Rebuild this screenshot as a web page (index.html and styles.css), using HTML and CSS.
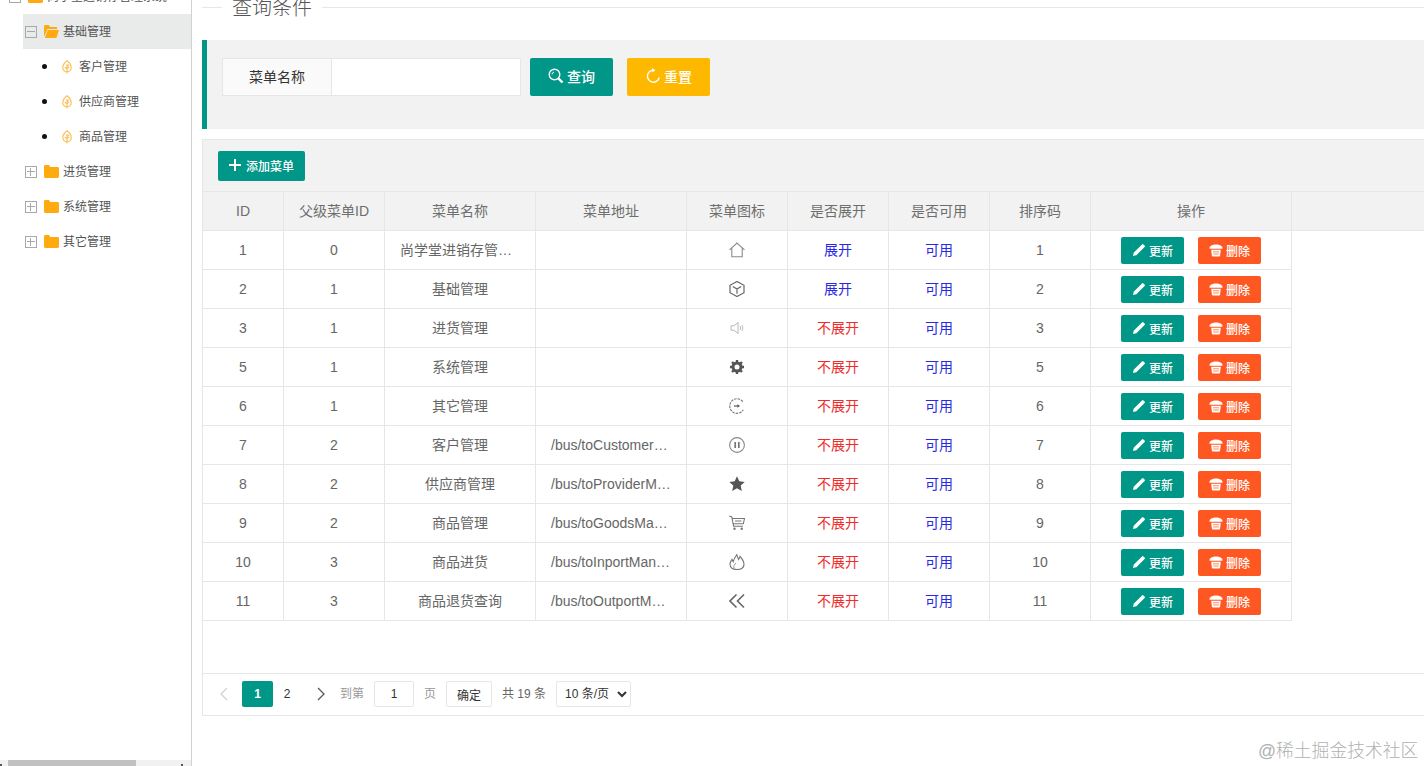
FILE: index.html
```html
<!DOCTYPE html>
<html lang="zh-CN">
<head>
<meta charset="utf-8">
<title>菜单管理</title>
<link rel="stylesheet" href="styles.css">
</head>
<body>
<svg class="defs" width="0" height="0" aria-hidden="true">
  <defs>
    <symbol id="folder" viewBox="0 0 15 13"><path d="M0 1.5C0 .7.6 0 1.4 0h3.5l1.500 2h7.200c.8 0 1.400.6 1.400 1.400v8.200c0 .8-.6 1.400-1.400 1.400H1.400C.6 13 0 12.400 0 11.600z" fill="#ffab0f"/></symbol>
    <symbol id="folder-open" viewBox="0 0 15 13"><path d="M0 1.500C0 .7.600 0 1.400 0h3.300l1.500 2h5.800c.7 0 1.300.6 1.300 1.300V4H3.500L.6 11 0 11z" fill="#ffab0f"/><path d="M3.900 5H15l-2.600 8H.8z" fill="#ffab0f"/></symbol>
    <symbol id="leaf" viewBox="0 0 10 14"><path d="M5 .8C7.500 2.800 9.200 5 9.200 7.500c0 2.600-1.900 4.300-4.200 4.300S.8 10.100.8 7.500C.8 5 2.500 2.800 5 .8zM5 4v9.500M5 6.500 7 5M5 9 2.800 7.300M5 8.500l2.300-1.500" fill="none" stroke="#fbc25e" stroke-width="1.200"/></symbol>
    <symbol id="pencil" viewBox="0 0 14 14"><path d="M1 13l.7-3.300L10 1.400a1 1 0 0 1 1.400 0l1.200 1.200a1 1 0 0 1 0 1.400L4.300 12.300z" fill="#fff"/></symbol>
    <symbol id="trash" viewBox="0 0 14 14"><path d="M.5 5c0-1.800 2.800-3.500 6.500-3.500S13.500 3.200 13.500 5v.8H.5z" fill="#fff"/><path d="M2.200 6.800h9.600l-.7 5.700c-.1.700-.6 1.100-1.300 1.100H4.200c-.7 0-1.200-.4-1.300-1.100z" fill="#fff"/><path d="M4 8.800h6M4.200 11h5.600" stroke="#ff8a5c"/></symbol>
  </defs>
</svg>
<div class="app">
  <aside class="sidebar">
    <div class="tree-scroll">
      <ul class="tree">
        <li class="node root"><span class="switch minus"></span><svg class="folder"><use href="#folder"/></svg><span>尚学堂进销存管理系统</span></li>
        <li class="node active"><span class="switch minus"></span><svg class="folder"><use href="#folder-open"/></svg><span>基础管理</span></li>
        <li class="node leaf"><span class="dot"></span><svg class="leaf-icon"><use href="#leaf"/></svg><span>客户管理</span></li>
        <li class="node leaf"><span class="dot"></span><svg class="leaf-icon"><use href="#leaf"/></svg><span>供应商管理</span></li>
        <li class="node leaf"><span class="dot"></span><svg class="leaf-icon"><use href="#leaf"/></svg><span>商品管理</span></li>
        <li class="node"><span class="switch plus"></span><svg class="folder"><use href="#folder"/></svg><span>进货管理</span></li>
        <li class="node"><span class="switch plus"></span><svg class="folder"><use href="#folder"/></svg><span>系统管理</span></li>
        <li class="node"><span class="switch plus"></span><svg class="folder"><use href="#folder"/></svg><span>其它管理</span></li>
      </ul>
    </div>
    <div class="hscroll"><span class="hscroll-thumb"></span></div>
  </aside>
  <main class="main">
    <div class="content">
      <div class="legend"><span class="legend-line short"></span><span class="legend-text">查询条件</span><span class="legend-line"></span></div>
      <form class="search">
        <label class="search-label">菜单名称</label>
        <input class="search-input" type="text">
        <button class="btn btn-query" type="button">
          <svg class="ico-16" viewBox="0 0 16 16"><circle cx="6.500" cy="6.500" r="5.300" fill="none" stroke="#fff" stroke-width="1.400"/><path d="M4 6.500a2.700 2.700 0 0 1 2-2.500" fill="none" stroke="#fff"/><path d="M10.500 10.500l4 4" stroke="#fff" stroke-width="2.400"/></svg>查询</button>
        <button class="btn btn-reset" type="button">
          <svg class="ico-16" viewBox="0 0 16 16"><path d="M8.500 2.200a6 6 0 1 0 5.800 7.300" fill="none" stroke="#fff" stroke-width="1.400"/><path d="M7 0l3.400 2.200L7.200 4.600z" fill="#fff"/></svg>重置</button>
      </form>
      <section class="box">
        <div class="toolbar">
          <button class="btn-add" type="button"><svg class="ico-12" viewBox="0 0 12 12"><path d="M6 0v12M0 6h12" stroke="#fff" stroke-width="2"/></svg>添加菜单</button>
        </div>
        <div class="thead-wrap">
          <table class="grid">
            <colgroup><col class="c-id"><col class="c-pid"><col class="c-w"><col class="c-w"><col class="c-n"><col class="c-n"><col class="c-n"><col class="c-n"><col class="c-op"></colgroup>
            <thead>
              <tr><th>ID</th><th>父级菜单ID</th><th>菜单名称</th><th>菜单地址</th><th>菜单图标</th><th>是否展开</th><th>是否可用</th><th>排序码</th><th>操作</th></tr>
            </thead>
          </table>
        </div>
        <div class="tbody-wrap">
          <table class="grid">
            <colgroup><col class="c-id"><col class="c-pid"><col class="c-w"><col class="c-w"><col class="c-n"><col class="c-n"><col class="c-n"><col class="c-n"><col class="c-op"></colgroup>
            <tbody>
              <tr><td>1</td><td>0</td><td><div class="cell">尚学堂进销存管理系统</div></td><td><div class="cell"></div></td>
                <td><svg class="row-ico" viewBox="0 0 16 16"><path d="M.5 7.800 8 1l7.500 6.800M2.800 5.800V14.800h10.400V5.800" fill="none" stroke="#8a8a8a" stroke-width="1.100"/></svg></td>
                <td class="blue">展开</td><td class="blue">可用</td><td>1</td><td><div class="ops"><button class="op op-edit" type="button"><svg class="ico-14"><use href="#pencil"/></svg>更新</button><button class="op op-del" type="button"><svg class="ico-14"><use href="#trash"/></svg>删除</button></div></td></tr>
              <tr><td>2</td><td>1</td><td><div class="cell">基础管理</div></td><td><div class="cell"></div></td>
                <td><svg class="row-ico" viewBox="0 0 16 16"><path d="M8 .5l7 3.800v7.400l-7 3.800-7-3.800V4.300zM3.800 5.500 8 8l4.200-2.500M8 8v4.800" fill="none" stroke="#666" stroke-width="1.200"/></svg></td>
                <td class="blue">展开</td><td class="blue">可用</td><td>2</td><td><div class="ops"><button class="op op-edit" type="button"><svg class="ico-14"><use href="#pencil"/></svg>更新</button><button class="op op-del" type="button"><svg class="ico-14"><use href="#trash"/></svg>删除</button></div></td></tr>
              <tr><td>3</td><td>1</td><td><div class="cell">进货管理</div></td><td><div class="cell"></div></td>
                <td><svg class="row-ico" viewBox="0 0 16 16"><path d="M2 5.800h3L9 2.500v11l-4-3.300H2zM11 6.200c.8 1 .8 2.600 0 3.600M12.800 5c1.300 1.800 1.300 4.200 0 6" fill="none" stroke="#b9b9b9"/></svg></td>
                <td class="red">不展开</td><td class="blue">可用</td><td>3</td><td><div class="ops"><button class="op op-edit" type="button"><svg class="ico-14"><use href="#pencil"/></svg>更新</button><button class="op op-del" type="button"><svg class="ico-14"><use href="#trash"/></svg>删除</button></div></td></tr>
              <tr><td>5</td><td>1</td><td><div class="cell">系统管理</div></td><td><div class="cell"></div></td>
                <td><svg class="row-ico" viewBox="0 0 16 16"><circle cx="8" cy="8" r="4" fill="none" stroke="#555" stroke-width="3"/><path d="M8 1v3M8 12v3M1 8h3M12 8h3M3 3l2.200 2.200M10.800 10.800 13 13M3 13l2.200-2.200M10.800 5.200 13 3" stroke="#555" stroke-width="2.400"/></svg></td>
                <td class="red">不展开</td><td class="blue">可用</td><td>5</td><td><div class="ops"><button class="op op-edit" type="button"><svg class="ico-14"><use href="#pencil"/></svg>更新</button><button class="op op-del" type="button"><svg class="ico-14"><use href="#trash"/></svg>删除</button></div></td></tr>
              <tr><td>6</td><td>1</td><td><div class="cell">其它管理</div></td><td><div class="cell"></div></td>
                <td><svg class="row-ico" viewBox="0 0 16 16"><path d="M13.800 3.600A7.300 7.300 0 1 0 14.300 11.800" fill="none" stroke="#777" stroke-width="1.100" stroke-dasharray="2.500 1"/><path d="M5 8h4" stroke="#555" stroke-width="1.200"/><path d="M8.500 6.200 11 8l-2.500 1.800z" fill="#555"/></svg></td>
                <td class="red">不展开</td><td class="blue">可用</td><td>6</td><td><div class="ops"><button class="op op-edit" type="button"><svg class="ico-14"><use href="#pencil"/></svg>更新</button><button class="op op-del" type="button"><svg class="ico-14"><use href="#trash"/></svg>删除</button></div></td></tr>
              <tr><td>7</td><td>2</td><td><div class="cell">客户管理</div></td><td><div class="cell left">/bus/toCustomerManager</div></td>
                <td><svg class="row-ico" viewBox="0 0 16 16"><circle cx="8" cy="8" r="7.400" fill="none" stroke="#888" stroke-width="1.100"/><path d="M6.200 5v6M9.800 5v6" stroke="#777" stroke-width="1.700"/></svg></td>
                <td class="red">不展开</td><td class="blue">可用</td><td>7</td><td><div class="ops"><button class="op op-edit" type="button"><svg class="ico-14"><use href="#pencil"/></svg>更新</button><button class="op op-del" type="button"><svg class="ico-14"><use href="#trash"/></svg>删除</button></div></td></tr>
              <tr><td>8</td><td>2</td><td><div class="cell">供应商管理</div></td><td><div class="cell left">/bus/toProviderManager</div></td>
                <td><svg class="row-ico" viewBox="0 0 16 16"><path d="M8 .3l2.300 5 5.400.6-4 3.700 1.100 5.400L8 12.300 3.200 15l1.100-5.400-4-3.700 5.400-.6z" fill="#555"/></svg></td>
                <td class="red">不展开</td><td class="blue">可用</td><td>8</td><td><div class="ops"><button class="op op-edit" type="button"><svg class="ico-14"><use href="#pencil"/></svg>更新</button><button class="op op-del" type="button"><svg class="ico-14"><use href="#trash"/></svg>删除</button></div></td></tr>
              <tr><td>9</td><td>2</td><td><div class="cell">商品管理</div></td><td><div class="cell left">/bus/toGoodsManager</div></td>
                <td><svg class="row-ico" viewBox="0 0 16 16"><path d="M.3 1l2.500.9 1.800 9.300h9.400M3.200 3.500H15.500l-1.200 5.200H4.200M6 6h6.500" fill="none" stroke="#777" stroke-width="1.100"/><circle cx="5.500" cy="13.800" r="1.200" fill="#777"/><circle cx="12.700" cy="13.800" r="1.200" fill="#777"/></svg></td>
                <td class="red">不展开</td><td class="blue">可用</td><td>9</td><td><div class="ops"><button class="op op-edit" type="button"><svg class="ico-14"><use href="#pencil"/></svg>更新</button><button class="op op-del" type="button"><svg class="ico-14"><use href="#trash"/></svg>删除</button></div></td></tr>
              <tr><td>10</td><td>3</td><td><div class="cell">商品进货</div></td><td><div class="cell left">/bus/toInportManager</div></td>
                <td><svg class="row-ico" viewBox="0 0 16 16"><path d="M8 15.500c-4 0-7-1.800-7-5.200 0-2.200 1-3.700 2-5l1.200 2.400C5 5 6.300 2.800 7.800.5c.3 2.200 1.300 3.500 1.800 5 .7-1 1.200-1.900 1.400-3 1.900 2 4 4.600 4 7.800 0 3.400-3 5.200-7 5.200z" fill="none" stroke="#777" stroke-width="1.100"/><path d="M5 14c-.6-2 .6-3.700 2-5" fill="none" stroke="#999"/></svg></td>
                <td class="red">不展开</td><td class="blue">可用</td><td>10</td><td><div class="ops"><button class="op op-edit" type="button"><svg class="ico-14"><use href="#pencil"/></svg>更新</button><button class="op op-del" type="button"><svg class="ico-14"><use href="#trash"/></svg>删除</button></div></td></tr>
              <tr><td>11</td><td>3</td><td><div class="cell">商品退货查询</div></td><td><div class="cell left">/bus/toOutportManager</div></td>
                <td><svg class="row-ico" viewBox="0 0 16 16"><path d="M7.500 1.500 1 8l6.500 6.500M15 1.500 8.500 8l6.500 6.500" fill="none" stroke="#666" stroke-width="1.600"/></svg></td>
                <td class="red">不展开</td><td class="blue">可用</td><td>11</td><td><div class="ops"><button class="op op-edit" type="button"><svg class="ico-14"><use href="#pencil"/></svg>更新</button><button class="op op-del" type="button"><svg class="ico-14"><use href="#trash"/></svg>删除</button></div></td></tr>
            </tbody>
          </table>
        </div>
        <div class="pager">
          <span class="pg-arrow prev"><svg width="9" height="14" viewBox="0 0 9 14"><path d="M8 1 2 7l6 6" fill="none" stroke="#d2d2d2" stroke-width="1.300"/></svg></span>
          <span class="pg-num current">1</span>
          <span class="pg-num">2</span>
          <span class="pg-arrow next"><svg width="9" height="14" viewBox="0 0 9 14"><path d="M1 1l6 6-6 6" fill="none" stroke="#555" stroke-width="1.300"/></svg></span>
          <span class="pg-text">到第</span>
          <input class="pg-input" type="text" value="1">
          <span class="pg-text pg-gap">页</span>
          <button class="pg-ok" type="button">确定</button>
          <span class="pg-total">共 19 条</span>
          <select class="pg-size"><option>10 条/页</option></select>
        </div>
      </section>
    </div>
  </main>
</div>
<div class="watermark">@稀土掘金技术社区</div>
</body>
</html>
```

FILE: styles.css
```css
* { box-sizing: border-box; }
html, body { margin: 0; height: 100%; overflow: hidden; background: #fff; }
body { font-family: "Liberation Sans", "Noto Sans CJK SC", sans-serif; font-size: 14px; line-height: 20px; color: #666; }
.defs { position: absolute; }
button, input, select { font-family: inherit; }

.app { display: flex; height: 766px; }

/* sidebar */
.sidebar { width: 192px; flex: none; display: flex; flex-direction: column; border-right: 1px solid #d2d2d2; }
.tree-scroll { flex: 1; overflow: hidden; }
.tree { list-style: none; margin: -21px 0 0; padding: 0; }
.node { height: 35px; display: flex; align-items: center; margin-left: 23px; padding-left: 2px; font-size: 12px; color: #555; }
.node.root { margin-left: 7px; }
.node.active { background: #e9eaea; }
.node.leaf { padding-left: 21px; color: #555; }
.switch { width: 12px; height: 12px; flex: none; border: 1px solid #a8a8a8; position: relative; }
.switch::before { content: ""; position: absolute; left: 1px; right: 1px; top: 4px; height: 1px; background: #a8a8a8; }
.switch.plus::after { content: ""; position: absolute; top: 1px; bottom: 1px; left: 4px; width: 1px; background: #a8a8a8; }
.folder { width: 15px; height: 13px; flex: none; margin: 0 4px 0 7px; }
.dot { width: 5px; height: 5px; flex: none; border-radius: 50%; background: #111; margin-left: -2px; }
.leaf-icon { width: 10px; height: 14px; flex: none; margin: 0 7px 0 15px; }
.hscroll { height: 6px; flex: none; background: #f1f1f1; padding-left: 8px; position: relative; }
.hscroll-thumb { display: block; width: 128px; height: 6px; background: #c1c1c1; }
.hscroll::before, .hscroll::after { content: ""; position: absolute; bottom: 0; width: 2px; height: 2px; background: #555; }
.hscroll::before { left: 0; }
.hscroll::after { left: 181px; }

/* main */
.main { flex: 1; min-width: 0; overflow: hidden; padding-left: 10px; }
.content { width: 1240px; }
.legend { height: 15px; display: flex; align-items: center; gap: 10px; margin-bottom: 25px; }
.legend-line { flex: 1; height: 1px; background: #e6e6e6; }
.legend-line.short { flex: none; width: 20px; }
.legend-text { font-size: 20px; font-weight: 300; line-height: 20px; color: #555; }

.search { height: 89px; display: flex; align-items: flex-start; padding: 18px 0 0 15px; margin-bottom: 10px; background: #f2f2f2; border-left: 5px solid #009688; }
.search-label { width: 110px; height: 38px; display: flex; align-items: center; justify-content: center; background: #fafafa; border: 1px solid #e6e6e6; color: #333; }
.search-input { width: 189px; height: 38px; border: 1px solid #e6e6e6; border-left: 0; background: #fff; border-radius: 0 2px 2px 0; padding: 0 10px; outline: 0; }
.btn { width: 83px; height: 38px; margin-left: 9px; display: flex; align-items: center; justify-content: center; gap: 3px; border: 0; border-radius: 2px; color: #fff; font-size: 14px; font-weight: 500; padding: 0 0 2px; }
.btn-query { background: #009688; }
.btn-reset { background: #ffb800; margin-left: 14px; }
.ico-16 { width: 16px; height: 16px; flex: none; }
.ico-14 { width: 14px; height: 14px; flex: none; }
.ico-12 { width: 12px; height: 12px; flex: none; }

.box { border: 1px solid #e6e6e6; }
.toolbar { height: 51px; padding: 11px 15px 0; background: #f2f2f2; }
.btn-add { width: 87px; height: 30px; display: flex; align-items: center; justify-content: center; gap: 5px; padding: 0 0 2px; border: 0; border-radius: 2px; background: #009688; color: #fff; font-size: 12px; font-weight: 500; }

.thead-wrap { background: #f2f2f2; border-top: 1px solid #e6e6e6; border-bottom: 1px solid #e6e6e6; }
.tbody-wrap { height: 442px; }
.grid { table-layout: fixed; border-collapse: separate; border-spacing: 0; width: 1089px; }
.c-id { width: 81px; }
.c-pid { width: 101px; }
.c-w { width: 151px; }
.c-n { width: 101px; }
.c-op { width: 201px; }
.grid th { height: 38px; padding: 0; font-weight: 400; text-align: center; border-right: 1px solid #e6e6e6; color: #6e6e6e; }
.grid td { height: 39px; padding: 0; text-align: center; border-right: 1px solid #e6e6e6; border-bottom: 1px solid #e6e6e6; }
.cell { padding: 0 15px; white-space: nowrap; overflow: hidden; text-overflow: ellipsis; }
.cell.left { text-align: left; }
.grid td.blue { color: #2a2ae0; }
.grid td.red { color: #f02c2c; }
.row-ico { width: 16px; height: 16px; display: block; margin: 0 auto; }
.ops { display: flex; justify-content: center; gap: 14px; }
.op { width: 63px; height: 27px; display: flex; align-items: center; justify-content: center; gap: 3px; padding: 0; border: 0; border-radius: 2px; color: #fff; font-size: 12px; font-weight: 500; }
.op-edit { background: #009688; }
.op-del { background: #ff5722; }

.pager { height: 42px; border-top: 1px solid #e6e6e6; padding: 7px 0 0 4px; display: flex; align-items: flex-start; font-size: 12px; }
.pg-arrow { height: 26px; display: flex; align-items: center; justify-content: center; }
.pg-arrow.prev { width: 32px; margin-right: 3px; }
.pg-arrow.next { width: 39px; padding-left: 1px; }
.pg-num { width: 28px; height: 26px; display: flex; align-items: center; justify-content: center; color: #333; }
.pg-num.current { width: 31px; background: #009688; color: #fff; border-radius: 2px; font-weight: 700; }
.pg-text { line-height: 26px; color: #999; }
.pg-gap { margin-left: 10px; }
.pg-input { width: 40px; height: 26px; margin-left: 10px; border: 1px solid #e6e6e6; border-radius: 2px; background: #fff; text-align: center; font-size: 12px; color: #333; padding: 0; }
.pg-ok { width: 46px; height: 26px; margin-left: 10px; border: 1px solid #e6e6e6; border-radius: 2px; background: #fff; color: #333; font-size: 12px; padding: 0; }
.pg-total { margin-left: 10px; line-height: 26px; width: 54px; color: #666; }
.pg-size { width: 75px; height: 26px; border: 1px solid #e6e6e6; border-radius: 2px; background: #fff; color: #333; font-size: 12px; padding: 0 4px; }

.watermark { position: absolute; left: 1258px; top: 739px; font-size: 17.8px; line-height: 24px; font-weight: 300; color: #b0b0b0; }
```
